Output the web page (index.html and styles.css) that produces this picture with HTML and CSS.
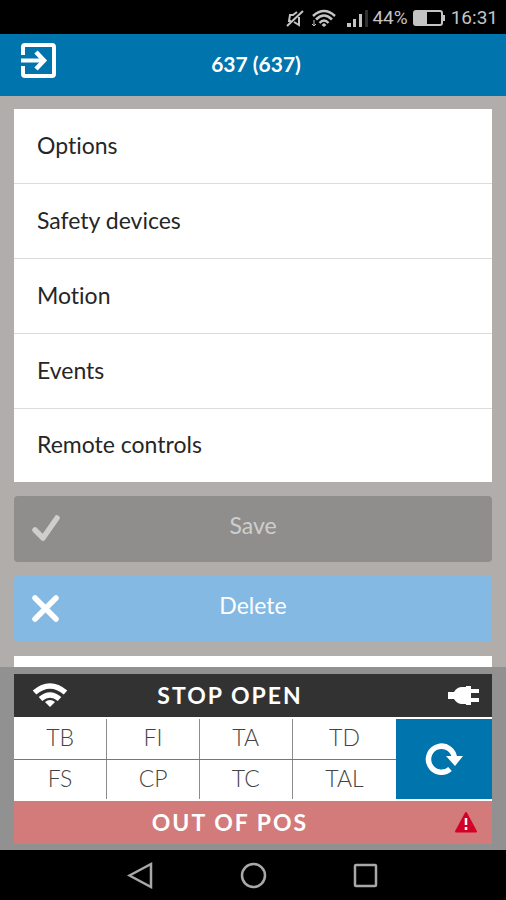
FILE: index.html
```html
<!DOCTYPE html>
<html lang="en">
<head>
<meta charset="utf-8">
<meta name="viewport" content="width=device-width, initial-scale=1">
<title>637 (637)</title>
<link rel="stylesheet" href="styles.css">
</head>
<body>
<div class="statusbar">
  <svg width="18" height="18" viewBox="0 0 18 18" fill="none" stroke="currentColor" stroke-width="2" aria-hidden="true"><path d="M11 3 7 6H4L3 12h2M8 13l5 3V8M1 17 17 2"/></svg>
  <svg class="wifi" width="25" height="18" viewBox="0 0 25 18" fill="none" stroke="currentColor" stroke-width="2.500" aria-hidden="true"><path d="M2 7Q13-3 24 7M5 10.500Q13 2.500 21 10.500M8.500 14Q13 9 17.500 14"/><path d="m10.500 16 2.500-2 2.500 2-2.500 2z" fill="currentColor" stroke="none"/><path d="M3 11v6M1 15l2 2 2-2" stroke-width="1"/></svg>
  <svg class="signal" width="22" height="18" viewBox="0 0 22 18" fill="currentColor" aria-hidden="true"><path d="M0 14h4v4H0zM6 10h3v8H6zM12 5h3v13h-3z"/><path d="M18 1h3v17h-3z" fill="#303030"/></svg>
  <span class="percent">44%</span>
  <svg class="battery" width="32" height="18" viewBox="0 0 32 18" fill="none" stroke="currentColor" aria-hidden="true"><rect x="1" y="2" width="28" height="14" rx="2" stroke-width="2"/><path d="M2 3h12v12H2z" fill="currentColor" stroke="none"/><path d="M31 6v6" stroke-width="2"/></svg>
  <span>16:31</span>
</div>
<header class="header">
  <button class="exit" type="button" aria-label="Exit">
    <svg width="35" height="35" viewBox="0 0 35 35" fill="none" stroke="currentColor" stroke-width="4" aria-hidden="true"><path d="M2 12V4q0-2 2-2h27q2 0 2 2v27q0 2-2 2H4q-2 0-2-2v-8M0 17.500h24"/><path d="m15 9 8 8.500-8 8.500" stroke-width="4.500"/></svg>
  </button>
  <h1 class="title">637 (637)</h1>
</header>
<main class="content">
  <nav class="card">
    <a class="row" href="#options">Options</a>
    <a class="row" href="#safety">Safety devices</a>
    <a class="row" href="#motion">Motion</a>
    <a class="row" href="#events">Events</a>
    <a class="row" href="#remotes">Remote controls</a>
  </nav>
  <button class="action save" type="button" disabled>
    <svg width="32" height="32" viewBox="0 0 32 32" fill="none" stroke="currentColor" stroke-width="5.500" stroke-linecap="round" stroke-linejoin="round" aria-hidden="true"><path d="m5 17 8 8L27 5"/></svg>
    <span>Save</span>
  </button>
  <button class="action delete" type="button">
    <svg width="32" height="32" viewBox="0 0 32 32" fill="none" stroke="currentColor" stroke-width="5.500" stroke-linecap="round" aria-hidden="true"><path d="m5 5 21 21M26 5 5 26"/></svg>
    <span>Delete</span>
  </button>
  <div class="card more"></div>
</main>
<section class="panel">
  <div class="bar state">
    <svg width="36" height="24" viewBox="0 0 36 24" fill="none" stroke="currentColor" stroke-width="5.500" aria-hidden="true"><path d="M2.500 9.500Q18-3.500 33.500 9.500M8.500 16Q18 8 27.500 16"/><path d="M13 19q5-4 10 0L18 24z" fill="currentColor" stroke="none"/></svg>
    <strong>STOP OPEN</strong>
    <svg width="32" height="20" viewBox="0 0 32 20" fill="currentColor" aria-hidden="true"><path d="M0 7h6q3-5 8-5h4V1h5v3h8v4h-8v5h8v4h-8v3h-5v-1h-4q-5 0-8-5H0z"/></svg>
  </div>
  <div class="inputs">
    <table class="grid">
      <tbody>
        <tr><td>TB</td><td>FI</td><td>TA</td><td>TD</td></tr>
        <tr><td>FS</td><td>CP</td><td>TC</td><td>TAL</td></tr>
      </tbody>
    </table>
    <button class="refresh" type="button" aria-label="Refresh">
      <svg width="38" height="34" viewBox="0 0 38 34" aria-hidden="true"><path d="M25 27A13 13 0 1 1 29.500 17" fill="none" stroke="currentColor" stroke-width="5.500"/><path d="M21 14h17l-8 10z" fill="currentColor"/></svg>
    </button>
  </div>
  <div class="bar alarm">
    <span></span>
    <strong>OUT OF POS</strong>
    <svg width="22" height="22" viewBox="0 0 22 22" aria-hidden="true"><path d="M11 2 21 20.500H1z" fill="#d50028" stroke="#d50028" stroke-width="2" stroke-linejoin="round"/><path d="M11 7v7M11 16v3" stroke="#fff" stroke-width="2.500"/></svg>
  </div>
</section>
<nav class="navbar">
  <button type="button" aria-label="Back"><svg width="28" height="28" viewBox="0 0 28 28" fill="none" stroke="currentColor" stroke-width="2.500" aria-hidden="true"><path d="M24 3v23L2.500 14.500z"/></svg></button>
  <button type="button" aria-label="Home"><svg width="28" height="28" viewBox="0 0 28 28" fill="none" stroke="currentColor" stroke-width="2.500" aria-hidden="true"><circle cx="14.500" cy="14.500" r="11.500"/></svg></button>
  <button type="button" aria-label="Recents"><svg width="28" height="28" viewBox="0 0 28 28" fill="none" stroke="currentColor" stroke-width="2.500" aria-hidden="true"><rect x="4" y="4" width="21" height="21" rx="1"/></svg></button>
</nav>
</body>
</html>
```
FILE: styles.css
```css
* { box-sizing: border-box; }

body {
  margin: 0;
  height: 100vh;
  display: flex;
  flex-direction: column;
  background: #b0adaa;
  color: #262626;
  font-family: Lato, "Liberation Sans", sans-serif;
  font-size: 23px;
  font-variant-ligatures: none;
}

button {
  margin: 0;
  padding: 0;
  border: 0;
  background: none;
  color: inherit;
  font: inherit;
}

svg { display: block; flex: none; }

.statusbar {
  flex: none;
  display: flex;
  align-items: center;
  justify-content: flex-end;
  height: 34px;
  padding: 2px 8px 0 0;
  background: #000;
  color: #c4c4c4;
  font: 19px/24px Roboto, sans-serif;
}
.wifi { margin-left: 7px; }
.signal { margin-left: 11px; }
.percent { margin-left: 3px; }
.battery { margin: 0 6px 0 5px; }

.header {
  flex: none;
  display: grid;
  grid-template-columns: 1fr auto 1fr;
  align-items: center;
  height: 62px;
  padding: 0 21px;
  background: #0074ad;
  color: #fff;
}
.exit { justify-self: start; padding-bottom: 10px; }
.title { margin: 0; padding: 0 0 2px 6px; font-size: 21px; line-height: 28px; font-weight: 700; }

.content {
  flex: 1;
  min-height: 0;
  overflow: hidden;
  display: flex;
  flex-direction: column;
  gap: 14px;
  padding: 13px 14px 0;
}
.card { flex: none; background: #fff; }
.row {
  display: block;
  padding: 22px 23px 24px;
  border-bottom: 1px solid #dcdcdc;
  color: inherit;
  line-height: 28px;
  text-decoration: none;
}
.row:last-child { padding: 21px 23px 24px; border-bottom: 0; }
.more { flex: 1; }

.action {
  flex: none;
  display: grid;
  grid-template-columns: 32px 1fr 32px;
  align-items: center;
  padding: 15px 16px;
  border-radius: 4px;
  color: #fff;
  line-height: 28px;
}
.action span { padding-bottom: 8px; }
.save { background: #8f8e8c; color: #cfcecc; }
.delete { background: #84b9e4; }

.panel { flex: none; padding: 7px 14px 6px; background: #919191; }
.bar {
  display: grid;
  grid-template-columns: 40px 1fr 92px;
  align-items: center;
  padding: 7px 12px 8px 18px;
  color: #fff;
  line-height: 28px;
  letter-spacing: 2px;
  text-align: center;
}
.bar svg:last-child { justify-self: end; }
.state { background: #323232; }
.alarm { background: #d37a7a; }
.alarm svg { margin-right: 3px; }

.inputs {
  display: flex;
  padding: 2px 0;
  background: #fff;
}
.grid {
  flex: 4;
  border-collapse: collapse;
  color: #444;
  font-weight: 300;
}
.grid td {
  width: 24%;
  height: 40px;
  padding: 0 0 3px;
  border-right: 1px solid #8c8c8c;
  line-height: 28px;
  text-align: center;
}
.grid tr:first-child td { border-bottom: 1px solid #777; }
.grid td:last-child { width: 27%; border-right: 0; }
.refresh {
  flex: 1;
  display: grid;
  place-items: center;
  background: #0074ad;
  color: #fff;
}

.navbar {
  flex: none;
  display: flex;
  justify-content: center;
  gap: 84px;
  padding: 11px 0;
  background: #000;
  color: #a8a8a8;
}
```
